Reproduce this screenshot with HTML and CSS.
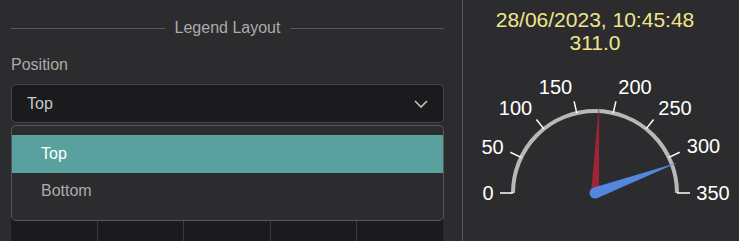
FILE: index.html
```html
<!DOCTYPE html>
<html lang="en">
<head>
    <meta charset="UTF-8">
    <meta name="viewport" content="width=device-width, initial-scale=1.0">
    <title>Legend Layout</title>
    <link rel="stylesheet" href="styles.css">
</head>
<body>
    <div class="settings">
        <div class="section-title">
            <span class="rule"></span>
            <span class="title-text">Legend Layout</span>
            <span class="rule"></span>
        </div>

        <div class="field-label">Position</div>
        <div class="select-wrap">
            <div class="select">
                <span>Top</span>
                <svg class="chevron" width="14" height="8" viewBox="0 0 14 8">
                    <polyline points="1,1 7,7 13,1" fill="none" stroke="#c4c4c4" stroke-width="1.6"/>
                </svg>
            </div>
            <ul class="menu">
                <li class="option active">Top</li>
                <li class="option">Bottom</li>
            </ul>
        </div>

        <div class="cells">
            <div class="cell"></div>
            <div class="cell"></div>
            <div class="cell"></div>
            <div class="cell"></div>
            <div class="cell"></div>
        </div>
    </div>

    <div class="preview">
        <div class="readout">
            <div>28/06/2023, 10:45:48</div>
            <div>311.0</div>
        </div>
        <svg class="gauge" width="276" height="187" viewBox="0 0 276 187">
            <!-- scale -->
            <path d="M50 139 A82 82 0 0 1 214 139" fill="none" stroke="#b8b8b8" stroke-width="4"/>
            <g stroke="#ffffff" stroke-width="1.5">
                <line x1="50" y1="139" x2="37" y2="139"/>
                <line x1="58.1" y1="103.4" x2="47.3" y2="98.2"/>
                <line x1="80.9" y1="74.9" x2="73.4" y2="65.5"/>
                <line x1="113.8" y1="59.1" x2="111.1" y2="47.4"/>
                <line x1="150.2" y1="59.1" x2="152.9" y2="47.4"/>
                <line x1="183.1" y1="74.9" x2="190.6" y2="65.5"/>
                <line x1="205.9" y1="103.4" x2="216.7" y2="98.2"/>
                <line x1="214" y1="139" x2="227" y2="139"/>
            </g>
            <g class="tick-labels" text-anchor="middle">
                <text x="25" y="146">0</text>
                <text x="29.5" y="100">50</text>
                <text x="52.5" y="61">100</text>
                <text x="92.5" y="40">150</text>
                <text x="172" y="40">200</text>
                <text x="212" y="61">250</text>
                <text x="240.5" y="99">300</text>
                <text x="250" y="146">350</text>
            </g>
            <!-- needles -->
            <polygon points="128,139.2 136,138.8 136.2,48.5" fill="#9e2438"/>
            <polygon points="133.9,144.2 130.1,133.8 215,108.5" fill="#5486e0"/>
            <circle cx="132" cy="139" r="5.5" fill="#5486e0"/>
        </svg>
    </div>
</body>
</html>
```

FILE: styles.css
```css
:root {
    --color-bg: #2c2c2e;
    --color-field: #1b1b1d;
    --color-border: #454547;
    --color-border-light: #58585a;
    --color-muted: #ababab;
    --color-accent: #59a19f;
    --color-readout: #f0e68c;
}

* {
    box-sizing: border-box;
}

body {
    margin: 0;
    height: 241px;
    overflow: hidden;
    display: flex;
    background: var(--color-bg);
    font-family: "Liberation Sans", Arial, sans-serif;
}

/* left column */
.settings {
    width: 462px;
    flex: none;
    padding: 18px 18px 0 11px;
    display: flex;
    flex-direction: column;
}

.section-title {
    display: flex;
    align-items: center;
    gap: 10px;
    height: 20px;
}

.rule {
    flex: 1;
    height: 1px;
    background: var(--color-border-light);
}

.title-text {
    font-size: 16px;
    color: var(--color-muted);
}

.field-label {
    margin-top: 17px;
    font-size: 16px;
    line-height: 20px;
    color: var(--color-muted);
}

.select-wrap {
    position: relative;
    margin-top: 9px;
    z-index: 2;
}

.select {
    height: 39px;
    display: flex;
    align-items: center;
    justify-content: space-between;
    padding: 0 15px 0 15px;
    background: var(--color-field);
    border: 1px solid var(--color-border);
    border-radius: 5px;
    font-size: 16px;
    color: #c6c9cc;
}

.menu {
    position: absolute;
    top: 41px;
    left: 0;
    right: 0;
    margin: 0;
    padding: 9px 0 10px;
    list-style: none;
    background: var(--color-bg);
    border: 1px solid var(--color-border-light);
    border-radius: 5px;
}

.option {
    height: 37.5px;
    display: flex;
    align-items: center;
    padding-left: 29px;
    font-size: 16px;
    color: var(--color-muted);
}

.option.active {
    background: var(--color-accent);
    color: #ffffff;
}

.cells {
    flex: 1;
    margin: 8px 1px 0 0;
    display: grid;
    grid-template-columns: repeat(5, 1fr);
    gap: 1px;
    background: #3a3a3c;
}

.cell {
    background: var(--color-field);
}

/* right column */
.preview {
    flex: 1;
    border-left: 1px solid var(--color-border-light);
    display: flex;
    flex-direction: column;
}

.readout {
    padding: 8px 12px 0 0;
    text-align: center;
    font-size: 21px;
    line-height: 23px;
    color: var(--color-readout);
}

.gauge {
    display: block;
    overflow: visible;
}

.tick-labels {
    font-family: "Liberation Sans", Arial, sans-serif;
    font-size: 20px;
    fill: #ffffff;
}
```
